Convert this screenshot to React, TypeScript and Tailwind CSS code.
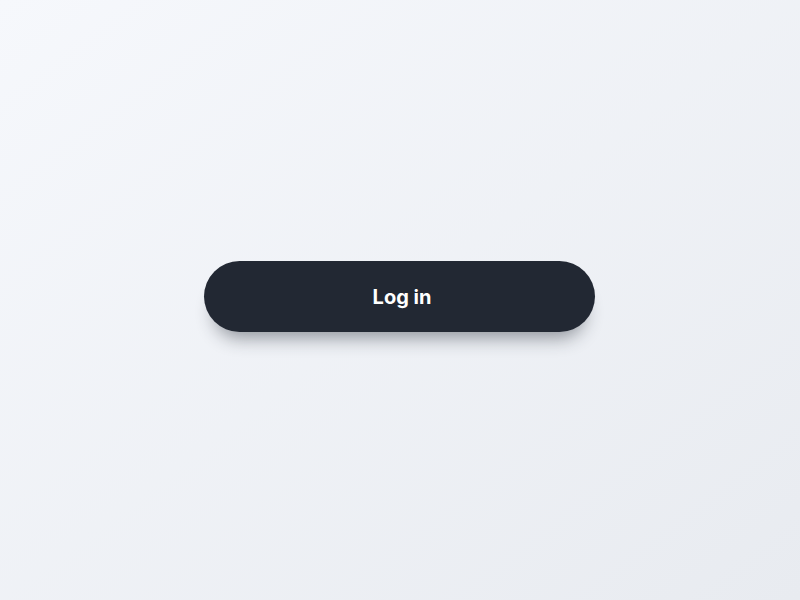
import React from 'react';

export default function App() {
  return (
    <div className="w-[800px] h-[600px] flex items-center justify-center pb-[7px] pr-[1px] bg-gradient-to-br from-[#f6f8fc] to-[#e8ebf0]">
      <button
        type="button"
        className="w-[391px] h-[71px] pl-[5px] rounded-full bg-[#222833] text-white text-[20px] font-bold shadow-[0_16px_18px_-10px_rgba(34,40,51,0.45)]"
        style={{ fontFamily: 'Inter, "Noto Sans", sans-serif' }}
      >
        Log in
      </button>
    </div>
  );
}
